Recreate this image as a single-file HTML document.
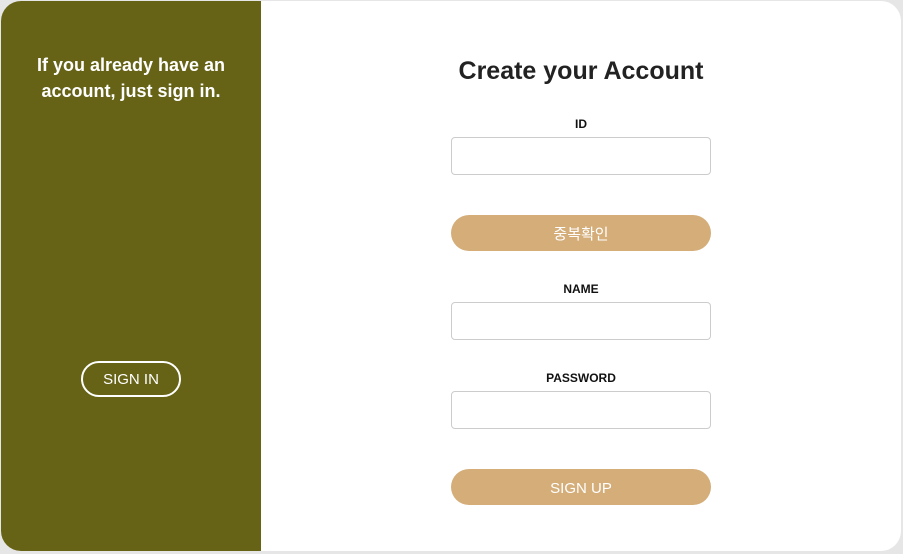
<!DOCTYPE html>
<html><head><meta charset="utf-8"><style>
html,body{margin:0;padding:0;width:903px;height:554px;background:#e6e6e6;overflow:hidden;font-family:"Liberation Sans","Noto Sans CJK KR",sans-serif}
.card{position:absolute;left:1px;top:1px;width:900px;height:550px;background:#fff;border-radius:20px;overflow:hidden}
.left{position:absolute;left:0;top:0;width:260px;height:550px;background:#666316}
.left h2{position:absolute;top:51px;left:0;width:260px;margin:0;text-align:center;color:#fff;font-size:18px;line-height:26px;font-weight:bold}
.signin{position:absolute;left:80px;top:360px;width:96px;height:32px;border:2px solid #fff;border-radius:18px;color:#fff;font-size:15px;text-align:center;line-height:34px}
h1{position:absolute;left:260px;width:640px;top:56px;margin:0;text-align:center;font-size:25px;font-weight:bold;color:#222}
.lbl{position:absolute;left:450px;width:260px;text-align:center;font-size:12px;font-weight:bold;color:#111}
.inp{position:absolute;left:450px;width:258px;height:36px;border:1px solid #ccc;border-radius:4px;background:#fff}
.btn{position:absolute;left:450px;width:260px;height:36px;border-radius:18px;background:#d4ad79;color:#fff;text-align:center;line-height:40px;font-size:15px}
</style></head><body>
<div class="card">
<div class="left"><h2>If you already have an<br>account, just sign in.</h2><div class="signin">SIGN IN</div></div>
<h1>Create your Account</h1>
<div class="lbl" style="top:116px">ID</div>
<div class="inp" style="top:136px"></div>
<div class="btn" style="top:214px">중복확인</div>
<div class="lbl" style="top:281px">NAME</div>
<div class="inp" style="top:301px"></div>
<div class="lbl" style="top:370px">PASSWORD</div>
<div class="inp" style="top:390px"></div>
<div class="btn" style="top:468px">SIGN UP</div>
</div>
</body></html>
